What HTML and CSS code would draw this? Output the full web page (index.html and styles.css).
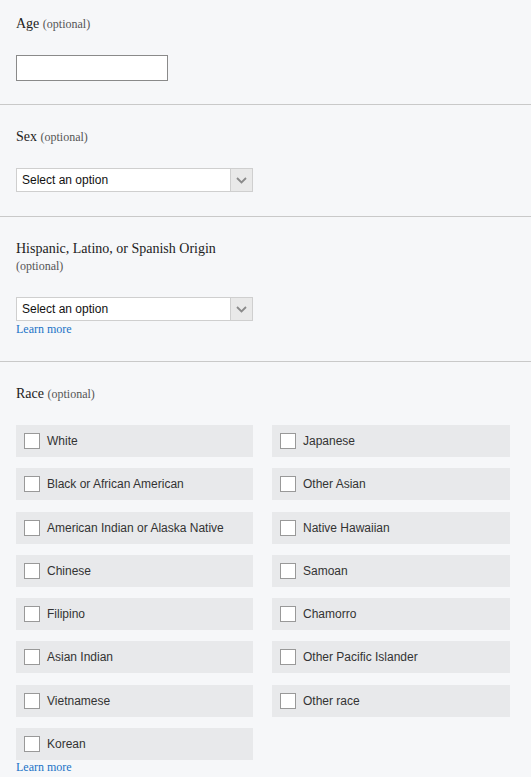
FILE: index.html
```html
<!DOCTYPE html>
<html>
<head>
<meta charset="utf-8">
<link rel="stylesheet" href="styles.css">
</head>
<body>
<div class="form">
  <section class="field first">
    <div class="label">Age <span class="opt">(optional)</span></div>
    <input class="text-input" type="text">
  </section>
  <section class="field">
    <div class="label">Sex <span class="opt">(optional)</span></div>
    <div class="select">
      <span class="select-text">Select an option</span>
      <span class="select-arrow"><svg width="11" height="7" viewBox="0 0 11 7"><path d="M1 1 L5.5 5.5 L10 1" fill="none" stroke="#8a8a8a" stroke-width="1.8"/></svg></span>
    </div>
  </section>
  <section class="field">
    <div class="label">Hispanic, Latino, or Spanish Origin<br><span class="opt">(optional)</span></div>
    <div class="select">
      <span class="select-text">Select an option</span>
      <span class="select-arrow"><svg width="11" height="7" viewBox="0 0 11 7"><path d="M1 1 L5.5 5.5 L10 1" fill="none" stroke="#8a8a8a" stroke-width="1.8"/></svg></span>
    </div>
    <a class="learn" href="#">Learn more</a>
  </section>
  <section class="field last">
    <div class="label">Race <span class="opt">(optional)</span></div>
    <div class="checks">
      <label class="check"><span class="box"></span>White</label>
      <label class="check"><span class="box"></span>Japanese</label>
      <label class="check"><span class="box"></span>Black or African American</label>
      <label class="check"><span class="box"></span>Other Asian</label>
      <label class="check"><span class="box"></span>American Indian or Alaska Native</label>
      <label class="check"><span class="box"></span>Native Hawaiian</label>
      <label class="check"><span class="box"></span>Chinese</label>
      <label class="check"><span class="box"></span>Samoan</label>
      <label class="check"><span class="box"></span>Filipino</label>
      <label class="check"><span class="box"></span>Chamorro</label>
      <label class="check"><span class="box"></span>Asian Indian</label>
      <label class="check"><span class="box"></span>Other Pacific Islander</label>
      <label class="check"><span class="box"></span>Vietnamese</label>
      <label class="check"><span class="box"></span>Other race</label>
      <label class="check"><span class="box"></span>Korean</label>
    </div>
    <a class="learn" href="#">Learn more</a>
  </section>
</div>
</body>
</html>
```
FILE: styles.css
```css
html, body {
  margin: 0;
  padding: 0;
  background: #f6f7f9;
}
body {
  font-family: "Liberation Serif", "Times New Roman", serif;
  color: #222;
}
.form {
  width: 531px;
}
.field {
  padding: 23px 16px 24px;
  border-bottom: 1px solid #c9c9c9;
}
.field.first {
  padding-top: 15px;
  padding-bottom: 23px;
}
.field.last {
  border-bottom: none;
  padding-bottom: 0;
}
.label {
  font-size: 14px;
  line-height: 17px;
  margin-bottom: 23px;
  color: #222;
}
.opt {
  font-size: 12px;
  line-height: 1;
  color: #555;
}
.text-input {
  display: block;
  box-sizing: border-box;
  width: 152px;
  height: 26px;
  margin: 0;
  border: 1px solid #8a8a8a;
  background: #fff;
  padding: 0 4px;
}
.select {
  display: flex;
  box-sizing: border-box;
  width: 237px;
  height: 24px;
  border: 1px solid #cfcfcf;
  background: #fff;
}
.select-text {
  flex: 1;
  font-family: "Liberation Sans", Arial, sans-serif;
  font-size: 12px;
  line-height: 22px;
  padding-left: 5px;
  color: #111;
}
.select-arrow {
  width: 21px;
  display: flex;
  align-items: center;
  justify-content: center;
  background: #e9e9e9;
  border-left: 1px solid #cfcfcf;
}
.learn {
  display: block;
  margin-top: 1px;
  font-size: 12px;
  line-height: 15px;
  color: #1a73c7;
  text-decoration: none;
}
.last .learn {
  margin-top: 0;
  line-height: 14px;
}
.checks {
  display: grid;
  grid-template-columns: 237px 238px;
  column-gap: 19px;
  row-gap: 11.3px;
}
.check {
  display: flex;
  align-items: center;
  height: 32px;
  background: #e8e9eb;
  padding-left: 8px;
  font-family: "Liberation Sans", Arial, sans-serif;
  font-size: 12px;
  color: #333;
}
.box {
  box-sizing: border-box;
  width: 16px;
  height: 16px;
  border: 1px solid #999;
  background: #fff;
  margin-right: 7px;
}
```
